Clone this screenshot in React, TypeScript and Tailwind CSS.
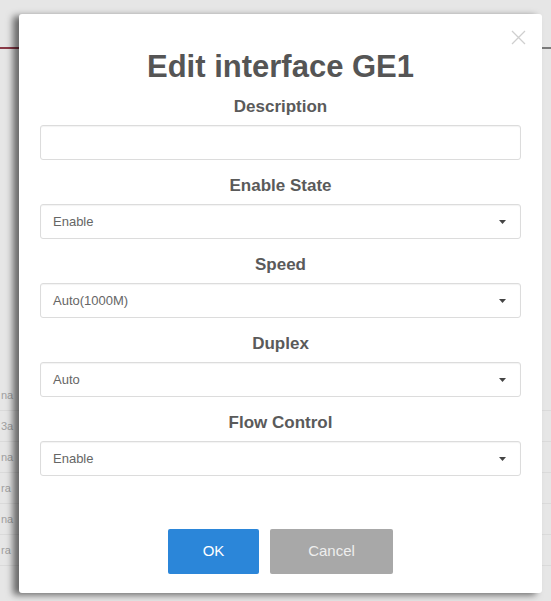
const fields = [
  { label: "Enable State", value: "Enable" },
  { label: "Speed", value: "Auto(1000M)" },
  { label: "Duplex", value: "Auto" },
  { label: "Flow Control", value: "Enable" },
];

const SelectBox = ({ value }: { value: string }) => {
  return (
    <div className="flex h-[35px] items-center justify-between rounded-[3px] border border-[#dcdcdc] bg-white pl-[12px] pr-[14px] shadow-[inset_0_1px_1px_rgba(0,0,0,0.05)]">
      <span className="text-[13px] text-[#666]">{value}</span>
      <svg width="7" height="4" viewBox="0 0 7 4">
        <path d="M0 0 L7 0 L3.5 4 Z" fill="#444" />
      </svg>
    </div>
  );
};

export default function App() {
  return (
    <div
      className="relative h-[601px] w-full overflow-hidden bg-[#e6e6e6]"
      style={{ fontFamily: '"Liberation Sans", Arial, sans-serif' }}
    >
      {/* page behind the dialog */}
      <div className="absolute left-0 top-[47px] h-[2px] w-[20px] bg-[#8a3a48]" />
      <div className="absolute right-0 top-[47px] h-[2px] w-[12px] bg-[#7a7a7a]" />
      <div className="absolute left-0 top-[380px] flex w-full flex-col text-[11px] text-[#a0a0a0]">
        {["na", "3a", "na", "ra", "na", "ra"].map((t, i) => (
          <div key={i} className="flex h-[31px] items-center border-b border-[#dadada] pl-[1px]">
            {t}
          </div>
        ))}
      </div>

      {/* dialog */}
      <div className="absolute left-[19px] top-[14px] flex h-[579px] w-[523px] flex-col rounded-[3px] bg-white px-[21px] pt-[35px] pb-[19px] shadow-[-6px_2px_7px_rgba(0,0,0,0.55)]">
        <button className="absolute right-[16px] top-[16px] text-[#cfcfcf]">
          <svg width="15" height="15" viewBox="0 0 15 15">
            <path d="M1 1 L14 14 M14 1 L1 14" stroke="currentColor" strokeWidth="1.3" />
          </svg>
        </button>

        <h1 className="h-[35px] text-center text-[31px] font-bold leading-[35px] text-[#555]">
          Edit interface GE1
        </h1>

        <div className="mt-[12px] flex flex-col">
          <label className="h-[22px] text-center text-[17px] font-bold leading-[22px] text-[#5a5a5a]">
            Description
          </label>
          <input
            type="text"
            className="mt-[7px] h-[35px] rounded-[3px] border border-[#dcdcdc] bg-white px-[12px] text-[13px] outline-none shadow-[inset_0_1px_1px_rgba(0,0,0,0.05)]"
          />
        </div>

        {fields.map((f) => (
          <div key={f.label} className="mt-[15px] flex flex-col">
            <label className="h-[22px] text-center text-[17px] font-bold leading-[22px] text-[#5a5a5a]">
              {f.label}
            </label>
            <div className="mt-[7px]">
              <SelectBox value={f.value} />
            </div>
          </div>
        ))}

        <div className="mt-auto flex justify-center gap-[11px]">
          <button className="h-[45px] w-[91px] rounded-[2px] bg-[#2b86d9] text-[15px] text-white">
            OK
          </button>
          <button className="h-[45px] w-[123px] rounded-[2px] bg-[#a8a8a8] text-[15px] text-[#eeeeee]">
            Cancel
          </button>
        </div>
      </div>
    </div>
  );
}
